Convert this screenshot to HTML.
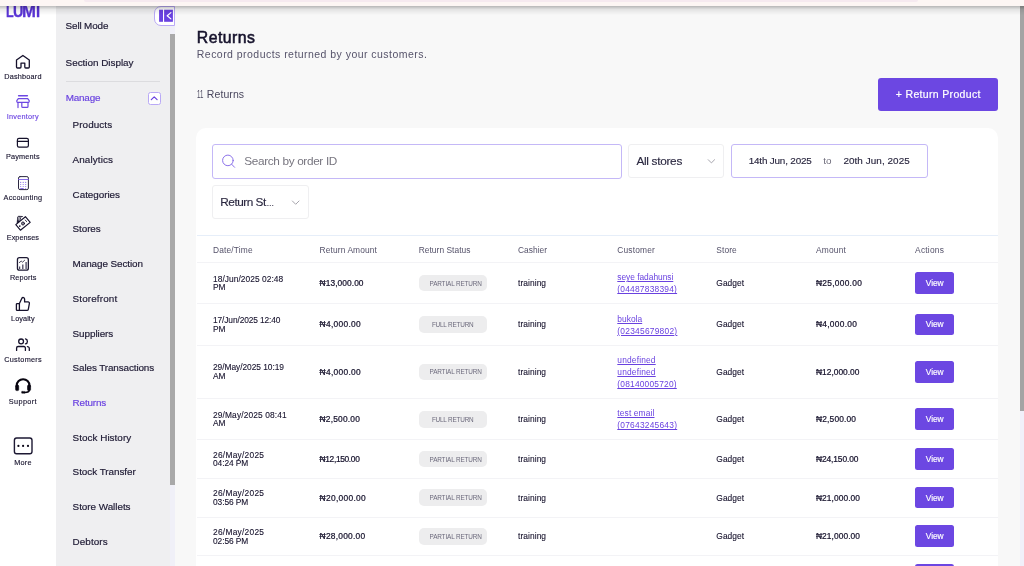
<!DOCTYPE html>
<html lang="en">
<head>
<meta charset="utf-8">
<title>Returns</title>
<style>
*{box-sizing:border-box;margin:0;padding:0}
html,body{width:1024px;height:566px;overflow:hidden;background:#f8f8f8;font-family:"Liberation Sans",sans-serif;color:#15112b}
body{position:relative}
.abs{position:absolute}
#txt{position:absolute;left:0;top:0;width:1024px;height:566px;will-change:transform;z-index:12}
.t{position:absolute;white-space:nowrap;z-index:10}
#logo span{position:absolute;top:0;display:block;transform-origin:0 0}
svg{position:absolute;overflow:visible;z-index:10}
/* top browser strip */
#chrome{left:0;top:0;width:1024px;height:6px;background:#fdf6f4;z-index:30}
#chrome .pill{left:84px;top:0;width:834px;height:1.5px;background:#f6eaf0;border-radius:0 0 3px 3px}
#shadow{left:0;top:6px;width:1024px;height:9px;background:linear-gradient(to bottom,rgba(0,0,0,.26),rgba(0,0,0,.08) 40%,rgba(0,0,0,0));z-index:29}
#rail{left:0;top:0;width:56px;height:566px;background:#fff}
#side{left:56px;top:0;width:119px;height:566px;background:#efeff1}
#track{left:170px;top:26px;width:5px;height:540px;background:#f0f0f8}
#thumb{left:170px;top:34px;width:5px;height:451px;background:#a9a9a9}
#sep{left:65.8px;top:81px;width:94.5px;height:1px;background:#dcdcdf}
#collapse{left:154.2px;top:6.2px;width:20.6px;height:19.5px;background:#fff;border:1px solid #b9a9f6;border-radius:7px 0 0 7px;z-index:9}
#chev{left:147.5px;top:92.2px;width:13.4px;height:12.6px;background:#fff;border:1px solid #b9a9f6;border-radius:2.5px}
#btn{left:878.2px;top:78.2px;width:119.8px;height:32.4px;background:#6c47e2;border-radius:3px}
#card{left:196.4px;top:127.6px;width:801.8px;height:460px;background:#fff;border-radius:10px}
.inp{background:#fff;border:1px solid #c4b8f7;border-radius:3px}
.sel{background:#fff;border:1px solid #efeff1;border-radius:3px}
.hl{left:196.8px;width:801.4px;height:1px;background:#f3f3f6}
#pscroll{left:1019.8px;top:6px;width:5px;height:404.7px;background:#a4a4a4;z-index:5}
#ptrack{left:1019.8px;top:410px;width:5px;height:156px;background:#f1f0fa;z-index:5}
</style>
</head>
<body>
<div id="rail" class="abs"></div>
<div id="side" class="abs"></div>
<div id="track" class="abs"></div>
<div id="thumb" class="abs"></div>
<div id="sep" class="abs"></div>
<div id="chev" class="abs"></div>
<div id="collapse" class="abs"></div>
<div id="ptrack" class="abs"></div>
<div id="pscroll" class="abs"></div>
<div id="chrome" class="abs"><div class="pill abs"></div></div>
<div id="shadow" class="abs"></div>
<div id="btn" class="abs"></div>
<div id="card" class="abs"></div>
<!-- filter boxes -->
<div class="abs inp" style="left:212px;top:144px;width:409.6px;height:34.6px"></div>
<div class="abs sel" style="left:628.2px;top:144px;width:95.6px;height:34.4px"></div>
<div class="abs inp" style="left:731px;top:144.2px;width:196.8px;height:34.2px"></div>
<div class="abs sel" style="left:212px;top:185.2px;width:96.5px;height:33.8px"></div>
<!-- table lines -->
<div class="abs hl" style="top:235.4px;background:#e6eef9"></div>
<div class="abs hl" style="top:261.8px"></div>
<div class="abs hl" style="top:303.3px"></div>
<div class="abs hl" style="top:344.8px"></div>
<div class="abs hl" style="top:398px"></div>
<div class="abs hl" style="top:439.2px"></div>
<div class="abs hl" style="top:477.9px"></div>
<div class="abs hl" style="top:516.6px"></div>
<div class="abs hl" style="top:555px"></div>
<div class="abs" style="left:914.9px;top:564px;width:39.4px;height:10px;border-radius:2.5px;background:#6c47e2"></div>
<div class="abs" style="left:418.7px;top:274.7px;width:68.3px;height:16.8px;border-radius:5px;background:#ededee"></div>
<div class="abs" style="left:914.9px;top:272.2px;width:39.4px;height:21.6px;border-radius:2.5px;background:#6c47e2"></div>
<div class="abs" style="left:418.7px;top:316.1px;width:68.3px;height:16.8px;border-radius:5px;background:#ededee"></div>
<div class="abs" style="left:914.9px;top:313.6px;width:39.4px;height:21.6px;border-radius:2.5px;background:#6c47e2"></div>
<div class="abs" style="left:418.7px;top:363.6px;width:68.3px;height:16.8px;border-radius:5px;background:#ededee"></div>
<div class="abs" style="left:914.9px;top:361.1px;width:39.4px;height:21.6px;border-radius:2.5px;background:#6c47e2"></div>
<div class="abs" style="left:418.7px;top:410.8px;width:68.3px;height:16.8px;border-radius:5px;background:#ededee"></div>
<div class="abs" style="left:914.9px;top:408.2px;width:39.4px;height:21.6px;border-radius:2.5px;background:#6c47e2"></div>
<div class="abs" style="left:418.7px;top:450.6px;width:68.3px;height:16.8px;border-radius:5px;background:#ededee"></div>
<div class="abs" style="left:914.9px;top:448.1px;width:39.4px;height:21.6px;border-radius:2.5px;background:#6c47e2"></div>
<div class="abs" style="left:418.7px;top:489.3px;width:68.3px;height:16.8px;border-radius:5px;background:#ededee"></div>
<div class="abs" style="left:914.9px;top:486.8px;width:39.4px;height:21.6px;border-radius:2.5px;background:#6c47e2"></div>
<div class="abs" style="left:418.7px;top:527.9px;width:68.3px;height:16.8px;border-radius:5px;background:#ededee"></div>
<div class="abs" style="left:914.9px;top:525.4px;width:39.4px;height:21.6px;border-radius:2.5px;background:#6c47e2"></div>
<svg width="1024" height="566" viewBox="0 0 1024 566" style="left:0;top:0" fill="none" stroke-linecap="round" stroke-linejoin="round">
<!-- dashboard -->
<path d="M16.5 60.1 L22.9 55.4 L29.3 60.1 V67 a1 1 0 0 1 -1 1 H25.8 a1 1 0 0 1 -1 -1 V63.1 H21 V67 a1 1 0 0 1 -1 1 H17.5 a1 1 0 0 1 -1 -1 Z" stroke="#15112b" stroke-width="1.3"/>
<!-- inventory -->
<g stroke="#6d48e2" stroke-width="1.2">
<path d="M18.6 95.8 H27.4" stroke-width="1.45"/>
<path d="M18.3 98.6 H27.7 L29.2 100.7 V101.6 a.8 .8 0 0 1 -.8 .8 H17.6 a.8 .8 0 0 1 -.8 -.8 V100.7 Z"/>
<path d="M18 102.6 V107.6" stroke-width="1.2"/>
<path d="M21.8 102.6 V106.4 a.9 .9 0 0 0 .9 .9 H27.1 a.9 .9 0 0 0 .9 -.9 V102.6" stroke-width="1.2"/>
</g>
<!-- payments -->
<g stroke="#15112b" stroke-width="1.2">
<rect x="17.4" y="138.4" width="11" height="8.7" rx="1.6"/>
<path d="M17.4 141.4 H28.4"/>
</g>
<!-- accounting -->
<rect x="18.5" y="176.6" width="9.9" height="13" rx="1.5" stroke="#2c2842" stroke-width="1"/>
<path d="M18.5 179.5 H28.4" stroke="#7a5ce8" stroke-width=".9"/>
<g fill="#8b70ec" stroke="none">
<circle cx="20.7" cy="182.4" r=".55"/><circle cx="23.2" cy="182.4" r=".55"/><circle cx="25.7" cy="182.4" r=".55"/>
<circle cx="20.7" cy="184.5" r=".55"/><circle cx="23.2" cy="184.5" r=".55"/><circle cx="25.7" cy="184.5" r=".55"/>
<circle cx="20.7" cy="186.5" r=".55"/><circle cx="23.2" cy="186.5" r=".55"/><circle cx="25.7" cy="186.5" r=".55"/>
<rect x="20.1" y="187.9" width="3.7" height="1" rx=".5"/><circle cx="25.7" cy="188.4" r=".5"/>
</g>
<!-- expenses -->
<g stroke="#15112b" stroke-width="1.15">
<path d="M25.4 216.7 L30.2 222.4 L20.4 230.2 L15.8 224.6 Z"/>
<circle cx="23" cy="223.5" r="1.5" stroke-width="1"/>
<path d="M22.5 223.8 L23.5 223.2" stroke-width=".8"/>
<path d="M17.3 222.8 L17.6 217 Q17.8 216.3 18.8 216.3 L22.5 216.5 M19.2 216.4 L18.6 221.7 M21.1 216.5 L19.9 220.6" stroke-width=".8"/>
<path d="M17.3 222.9 L17.5 220.2 L19.2 221.4 Z" fill="#15112b" stroke-width=".4"/>
<circle cx="19.8" cy="226.1" r=".85" fill="#15112b" stroke="none"/>
<path d="M25.3 220 L26.5 221.5" stroke-width=".9"/>
</g>
<!-- reports -->
<g stroke="#1d1933">
<rect x="17.45" y="257.65" width="10.9" height="12.55" rx="2" stroke-width="1.3"/>
<path d="M19.6 266.4 V269 M22.8 264.6 V269 M26.1 262 V269" stroke-width="1.3" stroke="#4a4660" stroke-linecap="butt"/>
<path d="M19.3 262.6 L21.2 261.1 L22.6 262.2 L24.6 260.3" stroke-width=".8"/>
</g>
<!-- loyalty -->
<g stroke="#15112b" stroke-width="1.3">
<path d="M19.4 303.6 H17.1 a.7 .7 0 0 0 -.7 .7 V309.7 a.7 .7 0 0 0 .7 .7 H19.4 Z"/>
<path d="M19.4 303.6 L21.9 298.2 a1.45 1.45 0 0 1 2.7 .7 V301.9 H28.1 a1.3 1.3 0 0 1 1.3 1.55 L28.3 309.3 a1.35 1.35 0 0 1 -1.35 1.1 H19.4"/>
</g>
<!-- customers -->
<g stroke="#15112b" stroke-width="1.3">
<circle cx="21.1" cy="341.4" r="2.4"/>
<path d="M25.5 338.9 a2.6 2.6 0 0 1 0 5"/>
<path d="M16.6 350.4 V348 a1.5 1.5 0 0 1 1.5 -1.5 H23.9 a1.5 1.5 0 0 1 1.5 1.5 V350.4"/>
<path d="M27.4 346.6 a1.9 1.9 0 0 1 1.9 1.9 V350.4"/>
</g>
<!-- support -->
<g stroke="#07040f">
<path d="M16.7 386.5 V385.6 a6.4 6.4 0 0 1 12.8 0 V386.5" stroke-width="2.1"/>
<rect x="15.6" y="385.1" width="3.1" height="5.5" rx="1" fill="#07040f" stroke-width=".6"/>
<rect x="27.5" y="385.1" width="3.1" height="5.5" rx="1" fill="#07040f" stroke-width=".6"/>
<path d="M29.2 390 c0 2.2 -1.8 2.5 -4.5 2.5" stroke-width="1.6"/>
<rect x="21.6" y="391.4" width="3.4" height="1.9" rx=".5" fill="#07040f" stroke-width=".4"/>
</g>
<!-- more -->
<rect x="14.4" y="438" width="17.6" height="15.7" rx="2.2" stroke="#1d1933" stroke-width="1.4"/>
<g fill="#0b0718" stroke="none"><circle cx="18.4" cy="445.9" r="1.1"/><circle cx="23.1" cy="445.9" r="1.1"/><circle cx="28" cy="445.9" r="1.1"/></g>
<!-- collapse icon -->
<g stroke="none" fill="#6941e0"><rect x="159.1" y="9.7" width="3.9" height="12.1"/><rect x="164.1" y="9.7" width="8.8" height="12.1"/></g>
<path d="M170.9 12.6 L167.2 15.75 L170.9 18.9" stroke="#fff" stroke-width="1.2"/>
<!-- manage chevron -->
<path d="M151.3 99.7 L154.2 96.8 L157.1 99.7" stroke="#6941e0" stroke-width="1.2"/>
<!-- search icon -->
<g stroke="#7050e4" stroke-width=".95" opacity=".85"><circle cx="227.9" cy="160.4" r="5.3"/><path d="M231.7 164.3 L234.6 167.3"/></g>
<!-- select chevrons -->
<path d="M708.2 159.7 L711.4 162.9 L714.6 159.7" stroke="#9b9aa3" stroke-width=".9"/>
<path d="M292.4 201 L295.7 204.3 L299 201" stroke="#9b9aa3" stroke-width=".9"/>
</svg>
<div id="logo" class="t" style="left:0;top:1.55px;width:56px;height:19px;font-size:16.4px;line-height:19px;font-weight:700;color:#5a34d6;-webkit-text-stroke:0.3px #5a34d6;will-change:transform"><span style="left:5.9px;transform:scaleX(.77)">L</span><span style="left:12.9px;transform:scaleX(.88)">U</span><span style="left:22.3px;transform:scaleX(1.02)">M</span><span style="left:36.3px;transform:scaleX(.9)">I</span></div>

<div id="txt"><div class="t" style="left:4.2px;top:72.59px;font-size:7.3px;line-height:8.76px;color:#15112b;letter-spacing:0.200px;-webkit-text-stroke:0.12px #15112b;">Dashboard</div>
<div class="t" style="left:6.8px;top:113.39px;font-size:7.3px;line-height:8.76px;color:#6941e0;letter-spacing:0.232px;-webkit-text-stroke:0.12px #6941e0;">Inventory</div>
<div class="t" style="left:5.9px;top:152.89px;font-size:7.3px;line-height:8.76px;color:#15112b;letter-spacing:0.193px;-webkit-text-stroke:0.12px #15112b;">Payments</div>
<div class="t" style="left:3.5px;top:194.09px;font-size:7.3px;line-height:8.76px;color:#15112b;letter-spacing:0.279px;-webkit-text-stroke:0.12px #15112b;">Accounting</div>
<div class="t" style="left:6.8px;top:234.49px;font-size:7.3px;line-height:8.76px;color:#15112b;letter-spacing:0.007px;-webkit-text-stroke:0.12px #15112b;">Expenses</div>
<div class="t" style="left:9.9px;top:274.39px;font-size:7.3px;line-height:8.76px;color:#15112b;letter-spacing:0.148px;-webkit-text-stroke:0.12px #15112b;">Reports</div>
<div class="t" style="left:11.0px;top:315.09px;font-size:7.3px;line-height:8.76px;color:#15112b;letter-spacing:0.082px;-webkit-text-stroke:0.12px #15112b;">Loyalty</div>
<div class="t" style="left:4.2px;top:355.79px;font-size:7.3px;line-height:8.76px;color:#15112b;letter-spacing:0.280px;-webkit-text-stroke:0.12px #15112b;">Customers</div>
<div class="t" style="left:8.8px;top:398.39px;font-size:7.3px;line-height:8.76px;color:#15112b;letter-spacing:0.377px;-webkit-text-stroke:0.12px #15112b;">Support</div>
<div class="t" style="left:14.2px;top:458.69px;font-size:7.3px;line-height:8.76px;color:#15112b;letter-spacing:0.219px;-webkit-text-stroke:0.12px #15112b;">More</div>
<div class="t" style="left:65.6px;top:20.33px;font-size:9.9px;line-height:11.88px;color:#1d1933;letter-spacing:-0.136px;-webkit-text-stroke:0.18px #1d1933;">Sell Mode</div>
<div class="t" style="left:65.6px;top:57.03px;font-size:9.9px;line-height:11.88px;color:#1d1933;letter-spacing:-0.011px;-webkit-text-stroke:0.18px #1d1933;">Section Display</div>
<div class="t" style="left:65.8px;top:92.43px;font-size:9.9px;line-height:11.88px;color:#6941e0;letter-spacing:-0.215px;-webkit-text-stroke:0.18px #6941e0;">Manage</div>
<div class="t" style="left:72.6px;top:119.33px;font-size:9.9px;line-height:11.88px;color:#1d1933;letter-spacing:0.077px;-webkit-text-stroke:0.18px #1d1933;">Products</div>
<div class="t" style="left:72.6px;top:154.04px;font-size:9.9px;line-height:11.88px;color:#1d1933;letter-spacing:0.098px;-webkit-text-stroke:0.18px #1d1933;">Analytics</div>
<div class="t" style="left:72.6px;top:188.75px;font-size:9.9px;line-height:11.88px;color:#1d1933;letter-spacing:-0.037px;-webkit-text-stroke:0.18px #1d1933;">Categories</div>
<div class="t" style="left:72.6px;top:223.46px;font-size:9.9px;line-height:11.88px;color:#1d1933;letter-spacing:-0.091px;-webkit-text-stroke:0.18px #1d1933;">Stores</div>
<div class="t" style="left:72.6px;top:258.17px;font-size:9.9px;line-height:11.88px;color:#1d1933;letter-spacing:-0.077px;-webkit-text-stroke:0.18px #1d1933;">Manage Section</div>
<div class="t" style="left:72.6px;top:292.88px;font-size:9.9px;line-height:11.88px;color:#1d1933;letter-spacing:0.133px;-webkit-text-stroke:0.18px #1d1933;">Storefront</div>
<div class="t" style="left:72.6px;top:327.59px;font-size:9.9px;line-height:11.88px;color:#1d1933;letter-spacing:-0.064px;-webkit-text-stroke:0.18px #1d1933;">Suppliers</div>
<div class="t" style="left:72.6px;top:362.30px;font-size:9.9px;line-height:11.88px;color:#1d1933;letter-spacing:-0.108px;-webkit-text-stroke:0.18px #1d1933;">Sales Transactions</div>
<div class="t" style="left:72.6px;top:397.01px;font-size:9.9px;line-height:11.88px;color:#6941e0;letter-spacing:-0.168px;-webkit-text-stroke:0.18px #6941e0;">Returns</div>
<div class="t" style="left:72.6px;top:431.72px;font-size:9.9px;line-height:11.88px;color:#1d1933;letter-spacing:0.033px;-webkit-text-stroke:0.18px #1d1933;">Stock History</div>
<div class="t" style="left:72.6px;top:466.43px;font-size:9.9px;line-height:11.88px;color:#1d1933;letter-spacing:-0.034px;-webkit-text-stroke:0.18px #1d1933;">Stock Transfer</div>
<div class="t" style="left:72.6px;top:501.14px;font-size:9.9px;line-height:11.88px;color:#1d1933;letter-spacing:-0.035px;-webkit-text-stroke:0.18px #1d1933;">Store Wallets</div>
<div class="t" style="left:72.6px;top:535.85px;font-size:9.9px;line-height:11.88px;color:#1d1933;letter-spacing:0.075px;-webkit-text-stroke:0.18px #1d1933;">Debtors</div>
<div class="t" style="left:196.8px;top:28.65px;font-size:15.8px;line-height:18.96px;color:#15112b;letter-spacing:0.470px;-webkit-text-stroke:0.55px #15112b;">Returns</div>
<div class="t" style="left:196.8px;top:47.76px;font-size:10.5px;line-height:12.6px;color:#56536a;letter-spacing:0.461px;">Record products returned by your customers.</div>
<div class="t" style="left:197.3px;top:88.06px;font-size:10.5px;line-height:12.6px;color:#4a475e;letter-spacing:0.000px;transform:scaleX(.58);transform-origin:0 0;">11</div>
<div class="t" style="left:206.8px;top:88.06px;font-size:10.5px;line-height:12.6px;color:#4a475e;letter-spacing:0.091px;">Returns</div>
<div class="t" style="left:895.8px;top:87.96px;font-size:10.5px;line-height:12.6px;color:#fff;letter-spacing:0.333px;-webkit-text-stroke:0.2px #fff;">+ Return Product</div>
<div class="t" style="left:244.2px;top:154.03px;font-size:11.8px;line-height:14.16px;color:#77757f;letter-spacing:-0.345px;">Search by order ID</div>
<div class="t" style="left:636.4px;top:154.03px;font-size:11.8px;line-height:14.16px;color:#2b2840;letter-spacing:-0.292px;-webkit-text-stroke:0.15px #2b2840;">All stores</div>
<div class="t" style="left:748.7px;top:155.23px;font-size:9.9px;line-height:11.88px;color:#2b2840;letter-spacing:-0.175px;-webkit-text-stroke:0.15px #2b2840;">14th Jun, 2025</div>
<div class="t" style="left:823.2px;top:155.23px;font-size:9.9px;line-height:11.88px;color:#6f6d7c;letter-spacing:0.175px;">to</div>
<div class="t" style="left:843.4px;top:155.23px;font-size:9.9px;line-height:11.88px;color:#2b2840;letter-spacing:0.075px;-webkit-text-stroke:0.15px #2b2840;">20th Jun, 2025</div>
<div class="t" style="left:220.3px;top:195.03px;font-size:11.8px;line-height:14.16px;color:#2b2840;letter-spacing:-0.494px;-webkit-text-stroke:0.15px #2b2840;">Return St</div>
<div class="t" style="left:266.4px;top:199.01px;font-size:7.6px;line-height:9.12px;color:#2b2840;letter-spacing:0.000px;-webkit-text-stroke:0.2px #2b2840;">…</div>
<div class="t" style="left:213.0px;top:244.65px;font-size:8.4px;line-height:10.08px;color:#55526a;letter-spacing:0.164px;">Date/Time</div>
<div class="t" style="left:319.6px;top:244.65px;font-size:8.4px;line-height:10.08px;color:#55526a;letter-spacing:0.117px;">Return Amount</div>
<div class="t" style="left:418.7px;top:244.65px;font-size:8.4px;line-height:10.08px;color:#55526a;letter-spacing:0.045px;">Return Status</div>
<div class="t" style="left:518.0px;top:244.65px;font-size:8.4px;line-height:10.08px;color:#55526a;letter-spacing:0.020px;">Cashier</div>
<div class="t" style="left:617.3px;top:244.65px;font-size:8.4px;line-height:10.08px;color:#55526a;letter-spacing:0.186px;">Customer</div>
<div class="t" style="left:716.3px;top:244.65px;font-size:8.4px;line-height:10.08px;color:#55526a;letter-spacing:0.094px;">Store</div>
<div class="t" style="left:816.0px;top:244.65px;font-size:8.4px;line-height:10.08px;color:#55526a;letter-spacing:0.204px;">Amount</div>
<div class="t" style="left:915.1px;top:244.65px;font-size:8.4px;line-height:10.08px;color:#55526a;letter-spacing:0.219px;">Actions</div>
<div class="t" style="left:213.0px;top:273.55px;font-size:8.4px;line-height:10.08px;color:#15112b;letter-spacing:0.053px;-webkit-text-stroke:0.1px #15112b;">18/Jun/2025 02:48</div>
<div class="t" style="left:213.0px;top:282.35px;font-size:8.4px;line-height:10.08px;color:#15112b;letter-spacing:0.000px;-webkit-text-stroke:0.1px #15112b;">PM</div>
<div class="t" style="left:319.6px;top:277.95px;font-size:8.4px;line-height:10.08px;color:#15112b;letter-spacing:0.069px;-webkit-text-stroke:0.22px #15112b;">₦13,000.00</div>
<div class="t" style="left:429.5px;top:279.64px;font-size:6.4px;line-height:7.68px;color:#6b697b;letter-spacing:-0.144px;">PARTIAL RETURN</div>
<div class="t" style="left:518.0px;top:277.95px;font-size:8.4px;line-height:10.08px;color:#15112b;letter-spacing:0.079px;-webkit-text-stroke:0.1px #15112b;">training</div>
<div class="t" style="left:617.3px;top:272.15px;font-size:8.4px;line-height:10.08px;color:#6941e0;letter-spacing:-0.025px;text-decoration:underline;">seye fadahunsi</div>
<div class="t" style="left:617.3px;top:284.35px;font-size:8.4px;line-height:10.08px;color:#6941e0;letter-spacing:0.229px;text-decoration:underline;">(04487838394)</div>
<div class="t" style="left:716.3px;top:277.95px;font-size:8.4px;line-height:10.08px;color:#15112b;letter-spacing:0.069px;-webkit-text-stroke:0.1px #15112b;">Gadget</div>
<div class="t" style="left:816.0px;top:277.95px;font-size:8.4px;line-height:10.08px;color:#15112b;letter-spacing:0.279px;-webkit-text-stroke:0.22px #15112b;">₦25,000.00</div>
<div class="t" style="left:925.8px;top:277.95px;font-size:8.4px;line-height:10.08px;color:#fff;letter-spacing:-0.054px;-webkit-text-stroke:0.15px #fff;">View</div>
<div class="t" style="left:213.0px;top:315.00px;font-size:8.4px;line-height:10.08px;color:#15112b;letter-spacing:-0.117px;-webkit-text-stroke:0.1px #15112b;">17/Jun/2025 12:40</div>
<div class="t" style="left:213.0px;top:323.80px;font-size:8.4px;line-height:10.08px;color:#15112b;letter-spacing:0.000px;-webkit-text-stroke:0.1px #15112b;">PM</div>
<div class="t" style="left:319.6px;top:319.40px;font-size:8.4px;line-height:10.08px;color:#15112b;letter-spacing:0.305px;-webkit-text-stroke:0.22px #15112b;">₦4,000.00</div>
<div class="t" style="left:431.9px;top:321.09px;font-size:6.4px;line-height:7.68px;color:#6b697b;letter-spacing:-0.200px;">FULL RETURN</div>
<div class="t" style="left:518.0px;top:319.40px;font-size:8.4px;line-height:10.08px;color:#15112b;letter-spacing:0.079px;-webkit-text-stroke:0.1px #15112b;">training</div>
<div class="t" style="left:617.3px;top:313.60px;font-size:8.4px;line-height:10.08px;color:#6941e0;letter-spacing:0.035px;text-decoration:underline;">bukola</div>
<div class="t" style="left:617.3px;top:325.80px;font-size:8.4px;line-height:10.08px;color:#6941e0;letter-spacing:0.252px;text-decoration:underline;">(02345679802)</div>
<div class="t" style="left:716.3px;top:319.40px;font-size:8.4px;line-height:10.08px;color:#15112b;letter-spacing:0.069px;-webkit-text-stroke:0.1px #15112b;">Gadget</div>
<div class="t" style="left:816.0px;top:319.40px;font-size:8.4px;line-height:10.08px;color:#15112b;letter-spacing:0.272px;-webkit-text-stroke:0.22px #15112b;">₦4,000.00</div>
<div class="t" style="left:925.8px;top:319.40px;font-size:8.4px;line-height:10.08px;color:#fff;letter-spacing:-0.054px;-webkit-text-stroke:0.15px #fff;">View</div>
<div class="t" style="left:213.0px;top:362.40px;font-size:8.4px;line-height:10.08px;color:#15112b;letter-spacing:-0.048px;-webkit-text-stroke:0.1px #15112b;">29/May/2025 10:19</div>
<div class="t" style="left:213.0px;top:371.20px;font-size:8.4px;line-height:10.08px;color:#15112b;letter-spacing:0.000px;-webkit-text-stroke:0.1px #15112b;">AM</div>
<div class="t" style="left:319.6px;top:366.80px;font-size:8.4px;line-height:10.08px;color:#15112b;letter-spacing:0.305px;-webkit-text-stroke:0.22px #15112b;">₦4,000.00</div>
<div class="t" style="left:429.5px;top:368.49px;font-size:6.4px;line-height:7.68px;color:#6b697b;letter-spacing:-0.144px;">PARTIAL RETURN</div>
<div class="t" style="left:518.0px;top:366.80px;font-size:8.4px;line-height:10.08px;color:#15112b;letter-spacing:0.079px;-webkit-text-stroke:0.1px #15112b;">training</div>
<div class="t" style="left:617.3px;top:354.90px;font-size:8.4px;line-height:10.08px;color:#6941e0;letter-spacing:0.178px;text-decoration:underline;">undefined</div>
<div class="t" style="left:617.3px;top:367.10px;font-size:8.4px;line-height:10.08px;color:#6941e0;letter-spacing:0.178px;text-decoration:underline;">undefined</div>
<div class="t" style="left:617.3px;top:379.30px;font-size:8.4px;line-height:10.08px;color:#6941e0;letter-spacing:0.206px;text-decoration:underline;">(08140005720)</div>
<div class="t" style="left:716.3px;top:366.80px;font-size:8.4px;line-height:10.08px;color:#15112b;letter-spacing:0.069px;-webkit-text-stroke:0.1px #15112b;">Gadget</div>
<div class="t" style="left:816.0px;top:366.80px;font-size:8.4px;line-height:10.08px;color:#15112b;letter-spacing:0.009px;-webkit-text-stroke:0.22px #15112b;">₦12,000.00</div>
<div class="t" style="left:925.8px;top:366.80px;font-size:8.4px;line-height:10.08px;color:#fff;letter-spacing:-0.054px;-webkit-text-stroke:0.15px #fff;">View</div>
<div class="t" style="left:213.0px;top:409.60px;font-size:8.4px;line-height:10.08px;color:#15112b;letter-spacing:0.122px;-webkit-text-stroke:0.1px #15112b;">29/May/2025 08:41</div>
<div class="t" style="left:213.0px;top:418.40px;font-size:8.4px;line-height:10.08px;color:#15112b;letter-spacing:0.000px;-webkit-text-stroke:0.1px #15112b;">AM</div>
<div class="t" style="left:319.6px;top:414.00px;font-size:8.4px;line-height:10.08px;color:#15112b;letter-spacing:0.205px;-webkit-text-stroke:0.22px #15112b;">₦2,500.00</div>
<div class="t" style="left:431.9px;top:415.69px;font-size:6.4px;line-height:7.68px;color:#6b697b;letter-spacing:-0.200px;">FULL RETURN</div>
<div class="t" style="left:518.0px;top:414.00px;font-size:8.4px;line-height:10.08px;color:#15112b;letter-spacing:0.079px;-webkit-text-stroke:0.1px #15112b;">training</div>
<div class="t" style="left:617.3px;top:408.20px;font-size:8.4px;line-height:10.08px;color:#6941e0;letter-spacing:0.136px;text-decoration:underline;">test email</div>
<div class="t" style="left:617.3px;top:420.40px;font-size:8.4px;line-height:10.08px;color:#6941e0;letter-spacing:0.236px;text-decoration:underline;">(07643245643)</div>
<div class="t" style="left:716.3px;top:414.00px;font-size:8.4px;line-height:10.08px;color:#15112b;letter-spacing:0.069px;-webkit-text-stroke:0.1px #15112b;">Gadget</div>
<div class="t" style="left:816.0px;top:414.00px;font-size:8.4px;line-height:10.08px;color:#15112b;letter-spacing:0.172px;-webkit-text-stroke:0.22px #15112b;">₦2,500.00</div>
<div class="t" style="left:925.8px;top:414.00px;font-size:8.4px;line-height:10.08px;color:#fff;letter-spacing:-0.054px;-webkit-text-stroke:0.15px #fff;">View</div>
<div class="t" style="left:213.0px;top:449.50px;font-size:8.4px;line-height:10.08px;color:#15112b;letter-spacing:0.260px;-webkit-text-stroke:0.1px #15112b;">26/May/2025</div>
<div class="t" style="left:213.0px;top:458.30px;font-size:8.4px;line-height:10.08px;color:#15112b;letter-spacing:-0.082px;-webkit-text-stroke:0.1px #15112b;">04:24 PM</div>
<div class="t" style="left:319.6px;top:453.90px;font-size:8.4px;line-height:10.08px;color:#15112b;letter-spacing:-0.341px;-webkit-text-stroke:0.22px #15112b;">₦12,150.00</div>
<div class="t" style="left:429.5px;top:455.59px;font-size:6.4px;line-height:7.68px;color:#6b697b;letter-spacing:-0.144px;">PARTIAL RETURN</div>
<div class="t" style="left:518.0px;top:453.90px;font-size:8.4px;line-height:10.08px;color:#15112b;letter-spacing:0.079px;-webkit-text-stroke:0.1px #15112b;">training</div>
<div class="t" style="left:716.3px;top:453.90px;font-size:8.4px;line-height:10.08px;color:#15112b;letter-spacing:0.069px;-webkit-text-stroke:0.1px #15112b;">Gadget</div>
<div class="t" style="left:816.0px;top:453.90px;font-size:8.4px;line-height:10.08px;color:#15112b;letter-spacing:-0.101px;-webkit-text-stroke:0.22px #15112b;">₦24,150.00</div>
<div class="t" style="left:925.8px;top:453.90px;font-size:8.4px;line-height:10.08px;color:#fff;letter-spacing:-0.054px;-webkit-text-stroke:0.15px #fff;">View</div>
<div class="t" style="left:213.0px;top:488.20px;font-size:8.4px;line-height:10.08px;color:#15112b;letter-spacing:0.260px;-webkit-text-stroke:0.1px #15112b;">26/May/2025</div>
<div class="t" style="left:213.0px;top:497.00px;font-size:8.4px;line-height:10.08px;color:#15112b;letter-spacing:-0.082px;-webkit-text-stroke:0.1px #15112b;">03:56 PM</div>
<div class="t" style="left:319.6px;top:492.60px;font-size:8.4px;line-height:10.08px;color:#15112b;letter-spacing:0.309px;-webkit-text-stroke:0.22px #15112b;">₦20,000.00</div>
<div class="t" style="left:429.5px;top:494.29px;font-size:6.4px;line-height:7.68px;color:#6b697b;letter-spacing:-0.144px;">PARTIAL RETURN</div>
<div class="t" style="left:518.0px;top:492.60px;font-size:8.4px;line-height:10.08px;color:#15112b;letter-spacing:0.079px;-webkit-text-stroke:0.1px #15112b;">training</div>
<div class="t" style="left:716.3px;top:492.60px;font-size:8.4px;line-height:10.08px;color:#15112b;letter-spacing:0.069px;-webkit-text-stroke:0.1px #15112b;">Gadget</div>
<div class="t" style="left:816.0px;top:492.60px;font-size:8.4px;line-height:10.08px;color:#15112b;letter-spacing:0.069px;-webkit-text-stroke:0.22px #15112b;">₦21,000.00</div>
<div class="t" style="left:925.8px;top:492.60px;font-size:8.4px;line-height:10.08px;color:#fff;letter-spacing:-0.054px;-webkit-text-stroke:0.15px #fff;">View</div>
<div class="t" style="left:213.0px;top:526.75px;font-size:8.4px;line-height:10.08px;color:#15112b;letter-spacing:0.260px;-webkit-text-stroke:0.1px #15112b;">26/May/2025</div>
<div class="t" style="left:213.0px;top:535.55px;font-size:8.4px;line-height:10.08px;color:#15112b;letter-spacing:-0.082px;-webkit-text-stroke:0.1px #15112b;">02:56 PM</div>
<div class="t" style="left:319.6px;top:531.15px;font-size:8.4px;line-height:10.08px;color:#15112b;letter-spacing:0.249px;-webkit-text-stroke:0.22px #15112b;">₦28,000.00</div>
<div class="t" style="left:429.5px;top:532.84px;font-size:6.4px;line-height:7.68px;color:#6b697b;letter-spacing:-0.144px;">PARTIAL RETURN</div>
<div class="t" style="left:518.0px;top:531.15px;font-size:8.4px;line-height:10.08px;color:#15112b;letter-spacing:0.079px;-webkit-text-stroke:0.1px #15112b;">training</div>
<div class="t" style="left:716.3px;top:531.15px;font-size:8.4px;line-height:10.08px;color:#15112b;letter-spacing:0.069px;-webkit-text-stroke:0.1px #15112b;">Gadget</div>
<div class="t" style="left:816.0px;top:531.15px;font-size:8.4px;line-height:10.08px;color:#15112b;letter-spacing:0.069px;-webkit-text-stroke:0.22px #15112b;">₦21,000.00</div>
<div class="t" style="left:925.8px;top:531.15px;font-size:8.4px;line-height:10.08px;color:#fff;letter-spacing:-0.054px;-webkit-text-stroke:0.15px #fff;">View</div></div>
</body>
</html>
